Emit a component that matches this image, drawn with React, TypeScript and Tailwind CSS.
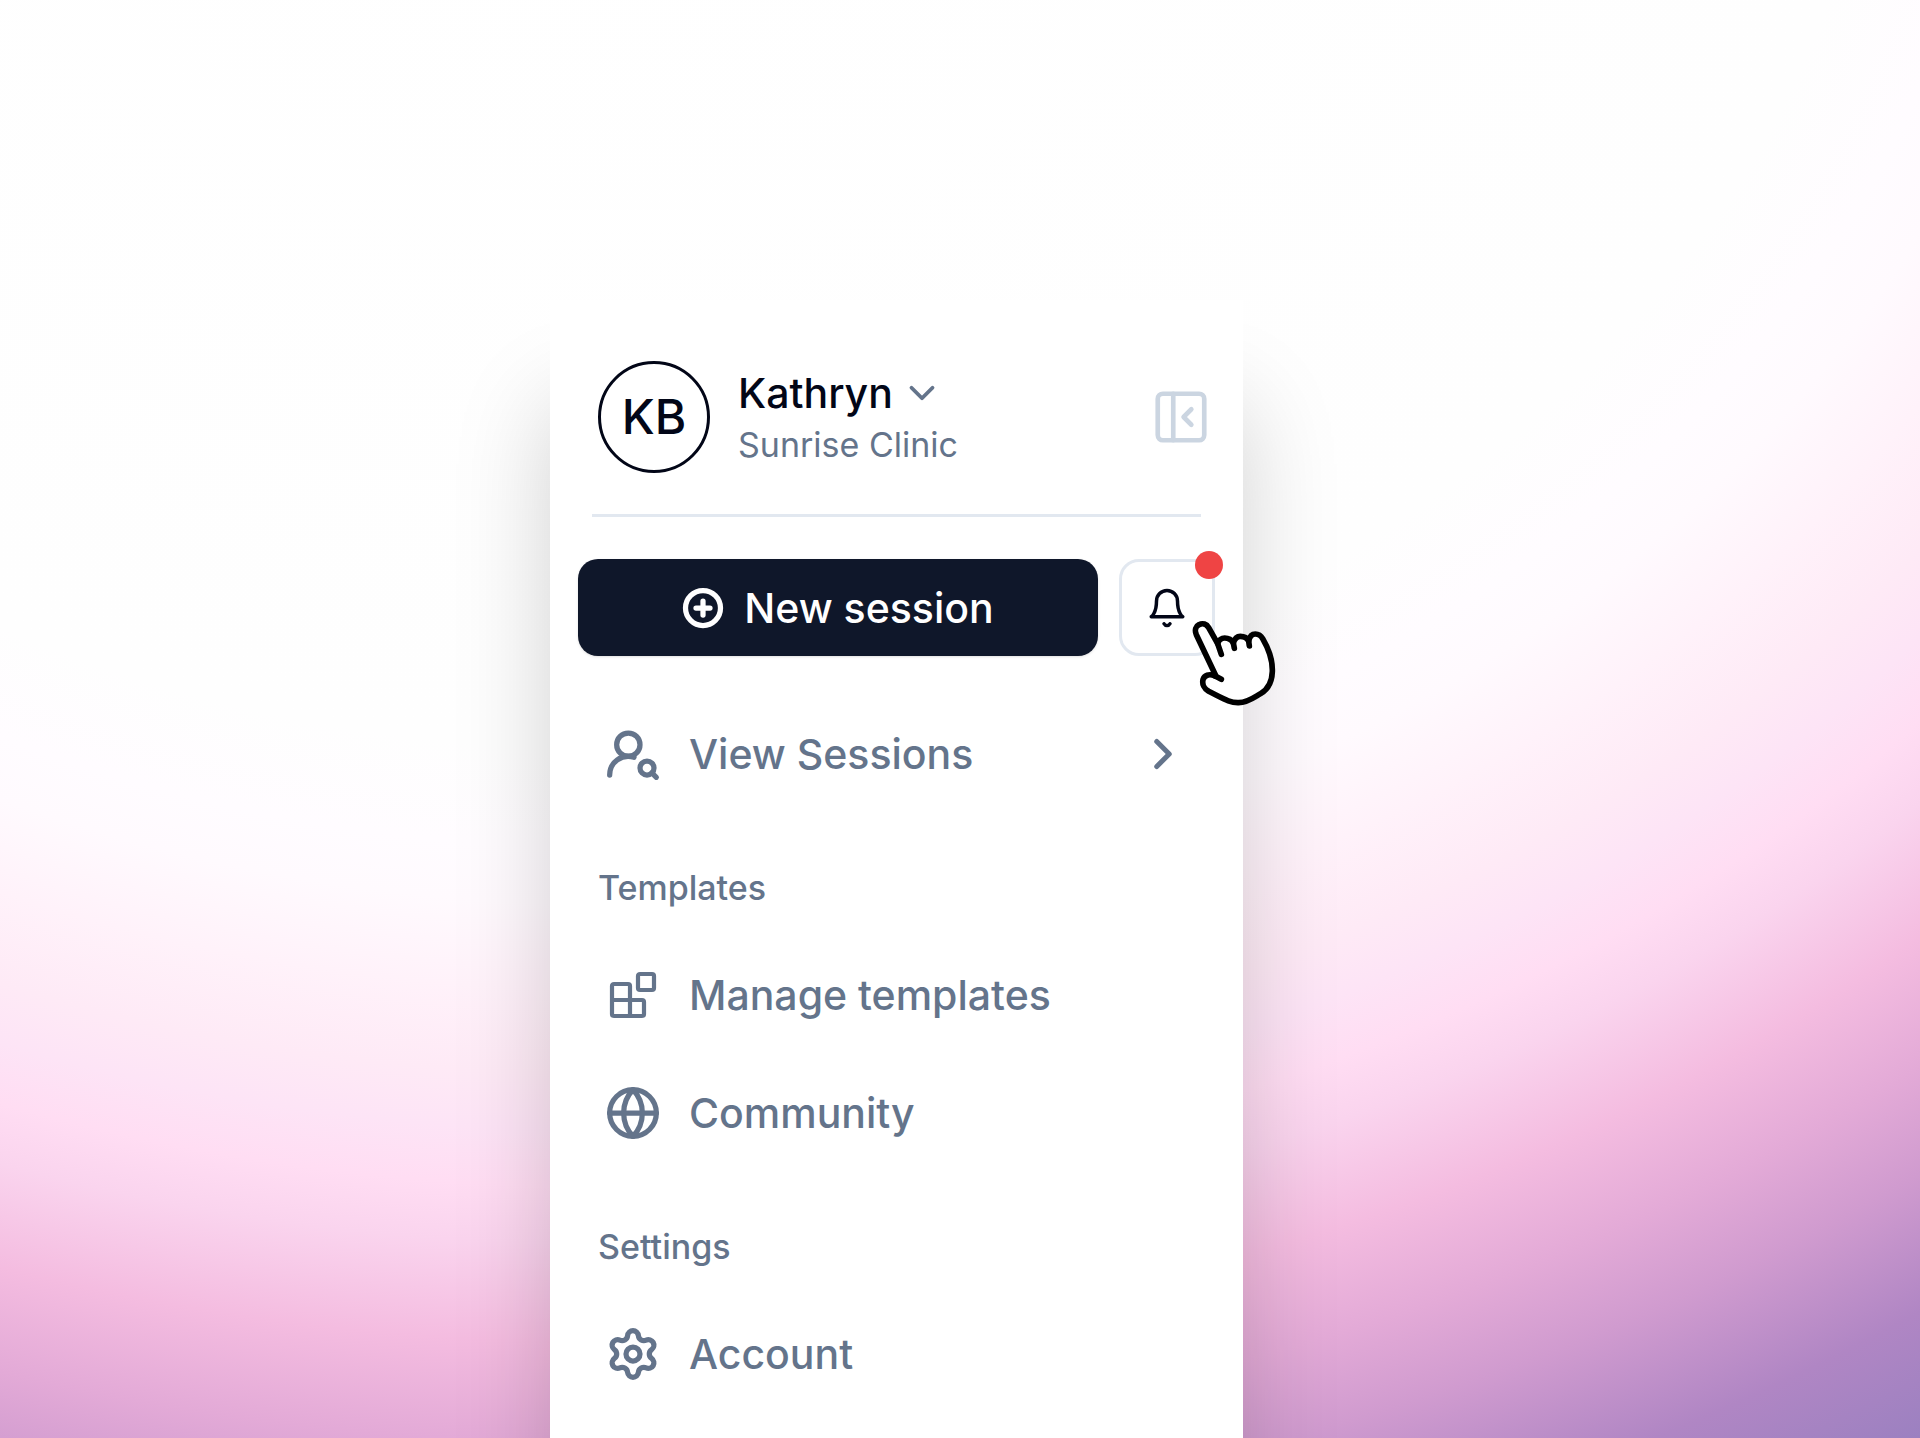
import React from 'react';
import {
  ChevronDown,
  ChevronRight,
  CirclePlus,
  Globe,
  PanelLeftClose,
  Settings,
  UserRoundSearch,
} from 'lucide-react';

interface NavItemProps {
  label: string;
  icon: React.ReactNode;
  chevron?: boolean;
}

const BlocksIcon = () => (
  <svg viewBox="0 0 56 56" className="size-14" fill="none" stroke="currentColor" strokeWidth="4.2" strokeLinejoin="round">
    <rect x="33" y="7" width="16" height="16" rx="2" />
    <path d="M25 33V19a2 2 0 0 0-2-2H9a2 2 0 0 0-2 2v28a2 2 0 0 0 2 2h28a2 2 0 0 0 2-2V35a2 2 0 0 0-2-2H7M25 33v16" />
  </svg>
);

const BellIcon = () => (
  <svg viewBox="0 0 24 24" className="size-[42px]" fill="none" stroke="currentColor" strokeWidth="2" strokeLinecap="round" strokeLinejoin="round">
    <path d="M6 8a6 6 0 0 1 12 0c0 7 3 9 3 9H3s3-2 3-9" />
    <path d="M10.3 21a1.94 1.94 0 0 0 3.4 0" />
  </svg>
);

const HandCursor = () => (
  <svg
    viewBox="0 0 330 330"
    className="pointer-events-none absolute top-[51px] left-[61px] size-[110px]"
    fill="#fff"
    stroke="#000"
    strokeWidth="17"
    strokeLinecap="round"
    strokeLinejoin="round"
  >
    <path d="M106 194L49 74C43 60 48 48 57 44C68 38 80 42 86 53L113 101C116 90 125 84 134 84C146 84 155 90 160 99C164 85 171 79 181 79C192 79 201 83 206 93C209 79 216 72 226 72C236 72 243 77 248 86C262 110 278 150 277 184C276 215 263 238 243 250C222 262 203 278 176 278C150 279 132 267 86 244C72 236 66 222 69 209C73 196 86 190 106 198" />
    <path d="M113 101L124 133M160 99L163 115M206 93L208 108M100 195L124 208" fill="none" />
  </svg>
);

const NavItem: React.FC<NavItemProps> = ({ label, icon, chevron }) => (
  <a href="#" className="flex h-[118px] items-center gap-7 px-[27px] text-[41px] leading-[52px] font-medium">
    {icon}
    <span className="grow">{label}</span>
    {chevron && <ChevronRight size={50} strokeWidth={2.4} />}
  </a>
);

const SectionLabel = ({ children }: { children: React.ReactNode }) => (
  <h2 className="mt-[55px] mb-7 px-5 text-[34px] leading-[40px] font-medium">{children}</h2>
);

export default function App() {
  return (
    <div className="flex min-h-screen justify-center overflow-hidden bg-[radial-gradient(1731px_1416px_at_600px_-300px,#fff_0%,#fefefe_74%,#fffcff_81%,#fffafe_85%,#fff2fa_91%,#feeaf6_97%,#fde4f6_101%,#ffddf3_105%,#fad4ee_109%,#f4bce0_116%,#e3aad7_123%,#d09bcf_129%,#b086c4_137%,#9a80c0_145%)] pt-[300px] pr-[127px] font-[Inter,sans-serif]">
      <aside className="w-[693px] bg-white px-7 pt-[61px] text-[#64748b] shadow-[0_105px_90px_0_rgba(0,0,0,0.18)]">
        {/* Profile */}
        <header className="flex items-center pr-[3px] pl-5">
          <div className="flex size-[112px] items-center justify-center rounded-full border-[3px] border-[#020617] text-[48px] font-medium text-[#020617]">
            KB
          </div>
          <div className="ml-7 grow pt-1">
            <button className="flex items-center gap-2 text-[41px] leading-[52px] font-medium text-[#020617]">
              Kathryn
              <ChevronDown size={42} strokeWidth={2.2} className="text-[#64748b]" />
            </button>
            <p className="text-[34px] leading-[52px]">Sunrise Clinic</p>
          </div>
          <button aria-label="Collapse sidebar" className="text-[#cbd5e1]">
            <PanelLeftClose size={62} strokeWidth={1.8} />
          </button>
        </header>

        <hr className="mx-[14px] mt-[41px] border-t-[3px] border-[#e2e8f0]" />

        {/* Actions */}
        <div className="mt-[42px] flex gap-[21px]">
          <button className="flex h-[97px] grow items-center justify-center gap-5 rounded-[20px] bg-[#0f172a] text-[41px] leading-[52px] font-medium text-white shadow-sm">
            <CirclePlus size={42} strokeWidth={3} />
            New session
          </button>
          <div className="relative">
            <button
              aria-label="Notifications"
              className="flex h-[97px] w-24 items-center justify-center rounded-[20px] border-[3px] border-[#e2e8f0] text-[#020617]"
            >
              <BellIcon />
            </button>
            <span className="absolute -top-2 -right-2 size-7 rounded-full bg-[#ef4444]" />
            <HandCursor />
          </div>
        </div>

        {/* Navigation */}
        <nav className="mt-[39px]">
          <NavItem label="View Sessions" icon={<UserRoundSearch size={56} strokeWidth={2.25} />} chevron />
          <SectionLabel>Templates</SectionLabel>
          <NavItem label="Manage templates" icon={<BlocksIcon />} />
          <NavItem label="Community" icon={<Globe size={56} strokeWidth={2.25} />} />
          <SectionLabel>Settings</SectionLabel>
          <NavItem label="Account" icon={<Settings size={56} strokeWidth={2.25} />} />
        </nav>
      </aside>
    </div>
  );
}
